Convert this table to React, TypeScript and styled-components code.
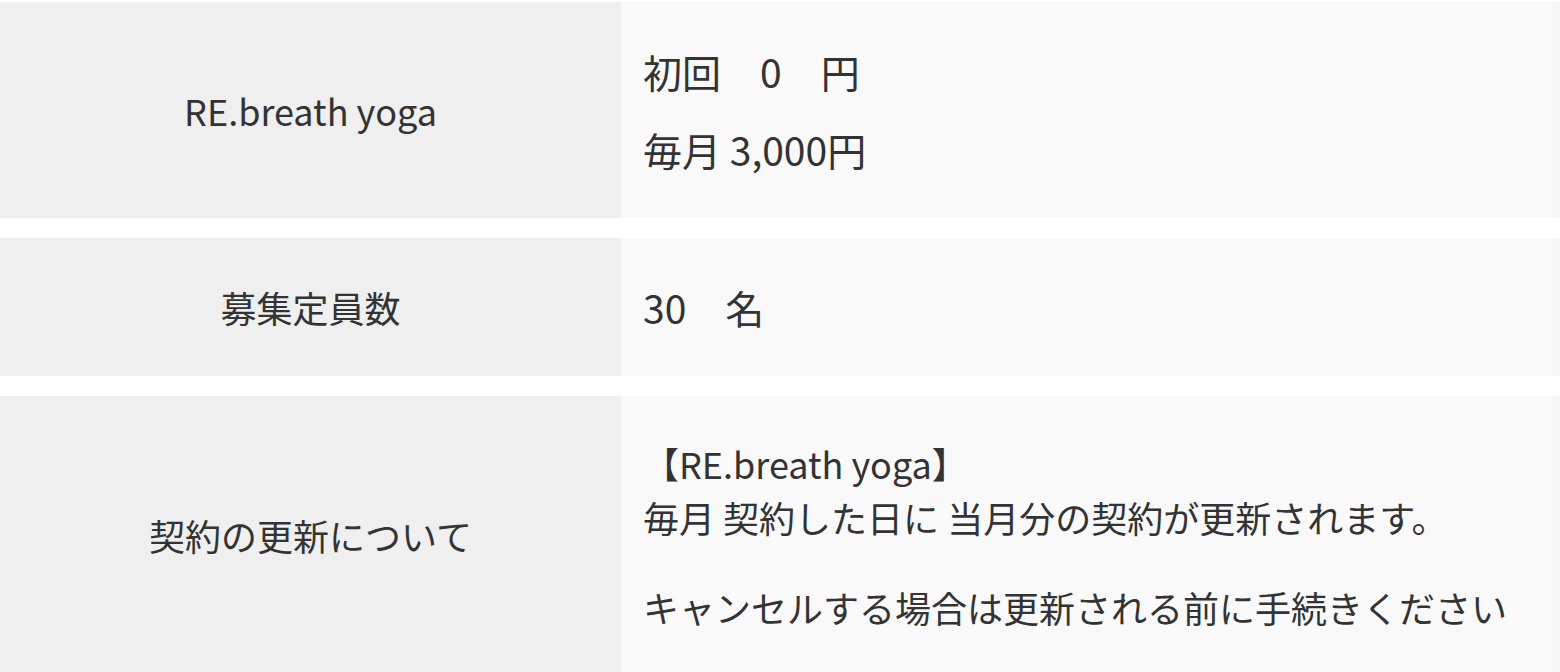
import styled, { createGlobalStyle } from "styled-components";

const GlobalStyle = createGlobalStyle`
  html, body {
    margin: 0;
    padding: 0;
    background: #ffffff;
  }
  body {
    font-family: "Noto Sans CJK JP", "Noto Sans", sans-serif;
    color: #333333;
  }
`;

const Table = styled.div`
  display: flex;
  flex-direction: column;
  gap: 20px;
  padding-top: 2px;
  width: 1560px;
`;

const Row = styled.div`
  display: grid;
  grid-template-columns: 621px 1fr;
`;

const Label = styled.div`
  background: #efefef;
  display: flex;
  align-items: center;
  justify-content: center;
  font-size: 36px;
  line-height: 54px;
`;

const Value = styled.div<{ $top: number; $bottom: number; $size?: number }>`
  background: #f9f9f9;
  padding: ${(p) => p.$top}px 22px ${(p) => p.$bottom}px;
  font-size: ${(p) => p.$size ?? 36}px;
  line-height: 54px;
  border-right: 7px solid #f7f7f7;
`;

const Line = styled.p<{ $gap?: number }>`
  margin: 0;
  margin-top: ${(p) => p.$gap ?? 0}px;
  white-space: pre;
`;

export default function App() {
  return (
    <>
      <GlobalStyle />
      <Table>
        <Row>
          <Label>RE.breath yoga</Label>
          <Value $top={42} $bottom={42} $size={39}>
            <Line>{"初回\u30000\u3000円"}</Line>
            <Line $gap={24}>毎月 3,000円</Line>
          </Value>
        </Row>
        <Row>
          <Label>募集定員数</Label>
          <Value $top={42} $bottom={42} $size={39}>
            <Line>{"30\u3000名"}</Line>
          </Value>
        </Row>
        <Row>
          <Label>契約の更新について</Label>
          <Value $top={40} $bottom={40}>
            <Line>【RE.breath yoga】</Line>
            <Line>毎月 契約した日に 当月分の契約が更新されます。</Line>
            <Line $gap={36}>キャンセルする場合は更新される前に手続きください</Line>
          </Value>
        </Row>
      </Table>
    </>
  );
}
